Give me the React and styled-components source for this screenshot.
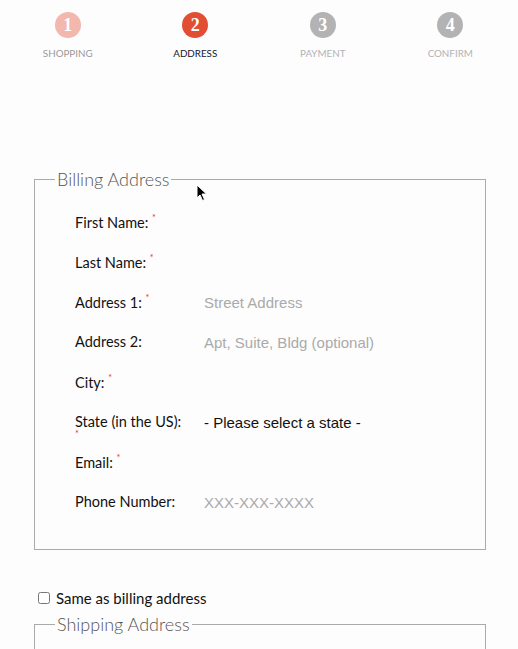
import React from 'react';
import styled, {createGlobalStyle} from 'styled-components';

const GlobalStyle = createGlobalStyle`
  html, body {
    margin: 0;
    padding: 0;
    overflow: hidden;
    background: #fdfdfd;
  }
  body {
    font-family: Lato, "Open Sans", sans-serif;
    color: #111;
  }
`;

const steps = [
  {n: 1, label: 'Shopping', state: 'done'},
  {n: 2, label: 'Address', state: 'active'},
  {n: 3, label: 'Payment', state: 'todo'},
  {n: 4, label: 'Confirm', state: 'todo'},
];

const circleColors = {done: '#f3b8ad', active: '#e14e34', todo: '#b3b3b3'};
const labelColors = {done: '#9a9a9a', active: '#16162a', todo: '#b2b2b8'};

const billingFields = [
  {label: 'First Name:', required: true},
  {label: 'Last Name:', required: true},
  {label: 'Address 1:', required: true, placeholder: 'Street Address'},
  {label: 'Address 2:', placeholder: 'Apt, Suite, Bldg (optional)'},
  {label: 'City:', required: true},
  {label: 'State (in the US):', required: true, select: true},
  {label: 'Email:', required: true},
  {label: 'Phone Number:', placeholder: 'XXX-XXX-XXXX'},
];

const Page = styled.div`
  position: relative;
  padding-top: 12px;
`;

const Stepper = styled.div`
  display: flex;
  padding: 0 4px;
`;

const Step = styled.div`
  flex: 1;
  display: flex;
  flex-direction: column;
  align-items: center;
`;

const Circle = styled.div`
  width: 26px;
  height: 26px;
  border-radius: 50%;
  background: ${p => circleColors[p.$state]};
  color: #fff;
  font-family: "Liberation Serif", "DejaVu Serif", serif;
  font-weight: 700;
  font-size: 18px;
  line-height: 26px;
  text-align: center;
`;

const StepLabel = styled.div`
  margin-top: 9px;
  font-size: 9.8px;
  line-height: 12px;
  text-transform: uppercase;
  color: ${p => labelColors[p.$state]};
`;

const Fieldset = styled.fieldset`
  margin: ${p => p.$top}px 0 0 34px;
  width: 452px;
  box-sizing: border-box;
  border: 1px solid #aaaaaa;
  padding: 0 0 15px 20px;
`;

const Legend = styled.legend`
  padding: 0 2px;
  font-size: 18px;
  line-height: 21px;
  font-weight: 300;
  color: #555;
`;

const Rows = styled.div`
  padding: 24px 0 0 20px;
`;

const Row = styled.div`
  display: grid;
  grid-template-columns: 110px 1fr;
  column-gap: 15px;
  align-items: start;
  min-height: 40px;
`;

const Label = styled.label`
  font-size: 14.5px;
  line-height: 16px;
  color: #111;
`;

const Star = styled.span`
  display: inline-block;
  line-height: 8px;
  vertical-align: 7px;
  color: #e3322b;
  font-size: 9px;
`;

const Input = styled.input`
  border: none;
  outline: none;
  background: transparent;
  padding: 0 4px;
  height: 18px;
  margin-top: -1px;
  width: 240px;
  font-family: "Liberation Sans", Arial, sans-serif;
  font-size: 15px;
  color: #111;

  &::placeholder {
    color: #aaaaaa;
  }
`;

const Select = styled.select`
  appearance: none;
  border: none;
  outline: none;
  background: transparent;
  padding: 0 4px;
  height: 18px;
  margin-top: -1px;
  width: 240px;
  font-family: "Liberation Sans", Arial, sans-serif;
  font-size: 15px;
  color: #111;
`;

const CheckRow = styled.label`
  display: flex;
  align-items: center;
  gap: 6px;
  margin: 40px 0 0 38px;
  font-size: 15px;
  line-height: 16px;
`;

const Check = styled.input`
  margin: 0;
  width: 12px;
  height: 12px;
`;

const Cursor = styled.svg`
  position: absolute;
  left: 196px;
  top: 184px;
`;

function Field({label, required, placeholder, select}) {
  return (
    <Row>
      <Label>{label}{required && <>{' '}<Star>*</Star></>}</Label>
      {select ? (
        <Select defaultValue="">
          <option value="">- Please select a state -</option>
        </Select>
      ) : (
        <Input placeholder={placeholder || ''} />
      )}
    </Row>
  );
}

export default function App() {
  return (
    <Page>
      <GlobalStyle />
      <Stepper>
        {steps.map(s => (
          <Step key={s.n}>
            <Circle $state={s.state}>{s.n}</Circle>
            <StepLabel $state={s.state}>{s.label}</StepLabel>
          </Step>
        ))}
      </Stepper>

      <Fieldset $top={110}>
        <Legend>Billing Address</Legend>
        <Rows>
          {billingFields.map(f => <Field key={f.label} {...f} />)}
        </Rows>
      </Fieldset>

      <CheckRow>
        <Check type="checkbox" />
        Same as billing address
      </CheckRow>

      <Fieldset $top={8}>
        <Legend>Shipping Address</Legend>
        <Rows>
          {billingFields.map(f => <Field key={f.label} {...f} />)}
        </Rows>
      </Fieldset>

      <Cursor width="12" height="18" viewBox="0 0 12 18">
        <path d="M1 1 L1 14 L4 11 L6.5 16.5 L8.5 15.5 L6 10 L10.5 10 Z" fill="#000" stroke="#fff" strokeWidth="1" />
      </Cursor>
    </Page>
  );
}
